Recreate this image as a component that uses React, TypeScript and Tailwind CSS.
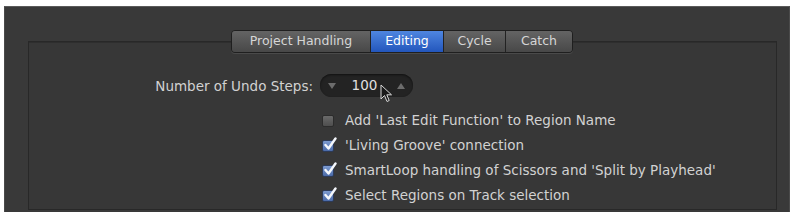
import { useState } from 'react';

const rows = [
    { label: "Add 'Last Edit Function' to Region Name", checked: false },
    { label: "'Living Groove' connection", checked: true },
    { label: "SmartLoop handling of Scissors and 'Split by Playhead'", checked: true },
    { label: "Select Regions on Track selection", checked: true },
];

const tabs = ['Project Handling', 'Editing', 'Cycle', 'Catch'];

function CheckBox({ checked }: { checked: boolean }) {
    if (!checked) {
        return <span className="shrink-0 w-[12px] h-[12px] rounded-[2px] bg-gradient-to-b from-[#6a6a6a] to-[#4e4e4e] border border-[#2c2c2c]" />;
    }
    return (
        <span className="relative shrink-0 w-[12px] h-[12px] rounded-[2px] bg-gradient-to-b from-[#7d9bd0] to-[#4a6aa8] border border-[#2c3a58]">
            <svg viewBox="0 0 14 14" className="absolute -top-[4px] left-0 w-[14px] h-[14px]">
                <path d="M2.5 8 L5.5 11.5 L12.5 1.5" fill="none" stroke="#f4f7fc" strokeWidth="2.4" strokeLinecap="round" strokeLinejoin="round" />
            </svg>
        </span>
    );
}

export default function App() {
    const [active, setActive] = useState('Editing');
    const [steps] = useState(100);

    return (
        <div className="w-[795px] h-[215px] bg-white pt-[6px] pl-[4px] pr-[5px] pb-[3px] font-['DejaVu_Sans',sans-serif] text-[13.5px]">
            <div className="relative h-full flex flex-col bg-[#393939] border-t border-[#5a5a5a] border-l border-l-[#4a4a4a] border-r border-r-[#4a4a4a]">
                <div className="relative z-10 flex justify-center pt-[23px] pl-[10px]">
                    <div className="flex h-[23px] rounded-[4px] border border-[#1f1f1f] shadow-[0_1px_0_#4a4a4a] overflow-hidden text-[12.5px]">
                        {tabs.map((t, i) => (
                            <button
                                key={t}
                                onClick={() => setActive(t)}
                                className={
                                    (active === t
                                        ? 'bg-gradient-to-b from-[#4f86e0] to-[#2356bc] text-white'
                                        : 'bg-gradient-to-b from-[#646464] to-[#484848] text-[#d6d6d6]') +
                                    (i > 0 ? ' border-l border-[#222]' : '') +
                                    ' flex items-center justify-center leading-none ' +
                                    (i === 0 ? 'w-[138px]' : i === 1 ? 'w-[73px]' : i === 2 ? 'w-[62px]' : 'w-[67px]')
                                }
                            >
                                {t}
                            </button>
                        ))}
                    </div>
                </div>

                <div className="flex-1 -mt-[12px] ml-[23px] mr-[12px] mb-[2px] bg-[#373737] border border-[#282828] shadow-[inset_0_1px_0_#2e2e2e]">
                    <div className="grid grid-cols-[284px_auto] gap-x-[7px] pt-[32px] text-[#d2d2d2]">
                        <div className="flex items-center justify-end h-[24px]">Number of Undo Steps:</div>
                        <div className="relative flex items-center w-[93px] h-[23px] rounded-full bg-[#232323] shadow-[inset_0_1px_2px_#111]">
                            <span className="w-[24px] flex justify-center">
                                <svg viewBox="0 0 8 6" className="w-[8px] h-[6px]"><path d="M0 0 H8 L4 6 Z" fill="#6c6c6c" /></svg>
                            </span>
                            <span className="flex-1 text-center text-[#e0e0e0] pr-[4px]">{steps}</span>
                            <span className="w-[24px] flex justify-center">
                                <svg viewBox="0 0 8 6" className="w-[8px] h-[6px]"><path d="M0 6 H8 L4 0 Z" fill="#6c6c6c" /></svg>
                            </span>
                            <svg viewBox="0 0 12 19" className="absolute left-[60px] top-[10px] w-[12px] h-[19px]">
                                <path d="M1 1 V15 L4.5 11.5 L7 17.5 L9.2 16.5 L6.8 10.8 H11.5 Z" fill="#1a1a1a" stroke="#d8d8d8" strokeWidth="1" strokeLinejoin="round" />
                            </svg>
                        </div>

                        <div className="col-start-2 flex flex-col pt-[10px]">
                            {rows.map(r => (
                                <div key={r.label} className="flex items-center gap-[11px] h-[25px] pl-[2px] whitespace-nowrap">
                                    <CheckBox checked={r.checked} />
                                    <span>{r.label}</span>
                                </div>
                            ))}
                        </div>
                    </div>
                </div>
            </div>
        </div>
    );
}
